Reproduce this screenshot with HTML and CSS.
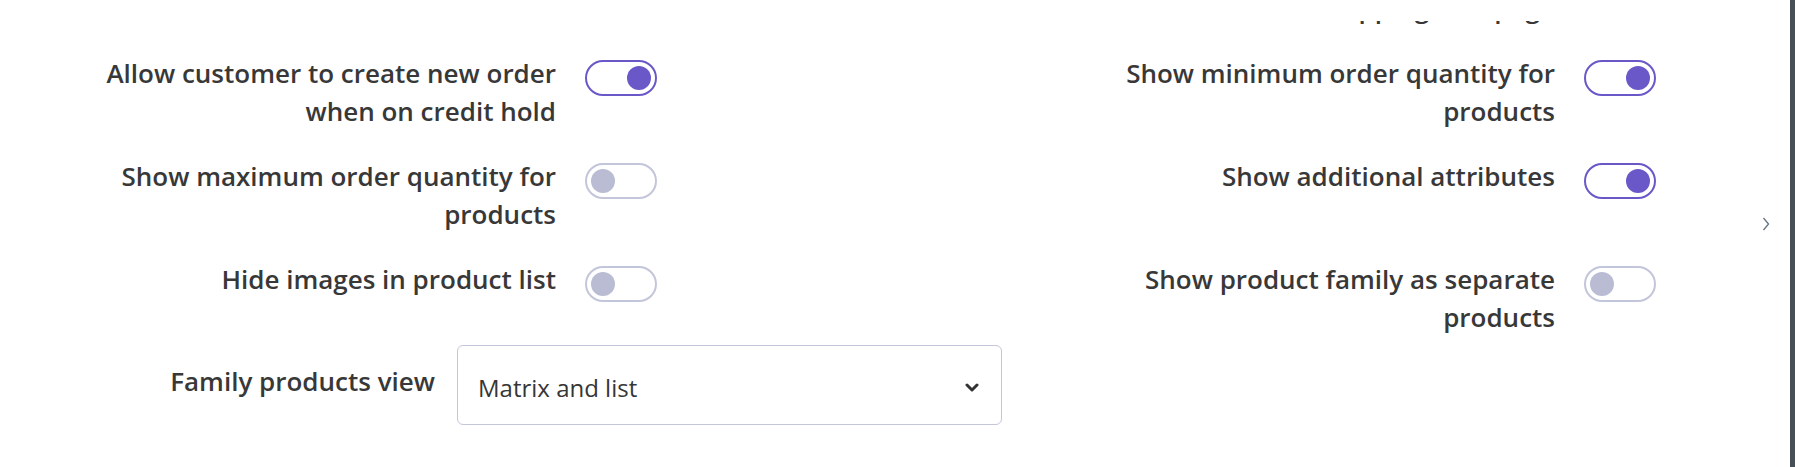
FILE: index.html
```html
<!DOCTYPE html>
<html lang="en">
<head>
<meta charset="utf-8">
<title>Settings</title>
<link rel="stylesheet" href="styles.css">
</head>
<body>
<div class="page">
  <main class="content">
    <div class="scroller">
      <div class="settings-grid">
        <div class="setting">
          <span class="label">Show prices in product list</span>
          <span class="toggle on"><span class="thumb"></span></span>
        </div>
        <div class="setting">
          <span class="label">Show estimated delivery costs on shipping cost page</span>
          <span class="toggle on"><span class="thumb"></span></span>
        </div>

        <div class="setting">
          <span class="label">Allow customer to create new order when on credit hold</span>
          <span class="toggle on"><span class="thumb"></span></span>
        </div>
        <div class="setting">
          <span class="label">Show minimum order quantity for products</span>
          <span class="toggle on"><span class="thumb"></span></span>
        </div>

        <div class="setting">
          <span class="label">Show maximum order quantity for products</span>
          <span class="toggle"><span class="thumb"></span></span>
        </div>
        <div class="setting">
          <span class="label">Show additional attributes</span>
          <span class="toggle on"><span class="thumb"></span></span>
        </div>

        <div class="setting">
          <span class="label">Hide images in product list</span>
          <span class="toggle"><span class="thumb"></span></span>
        </div>
        <div class="setting">
          <span class="label">Show product family as separate products</span>
          <span class="toggle"><span class="thumb"></span></span>
        </div>
      </div>

      <div class="select-row">
        <span class="select-label">Family products view</span>
        <div class="select">
          <span class="select-value">Matrix and list</span>
          <svg class="select-caret" width="14" height="9" viewBox="0 0 14 9" aria-hidden="true">
            <polyline points="2,2 7,7 12,2" fill="none" stroke="#333" stroke-width="3" stroke-linecap="round" stroke-linejoin="round"/>
          </svg>
        </div>
      </div>
    </div>
  </main>
  <aside class="side">
    <svg class="side-chevron" width="8" height="14" viewBox="0 0 8 14" aria-hidden="true">
      <polyline points="1.5,1 6.5,7 1.5,13" fill="none" stroke="#6c7886" stroke-width="1.4"/>
    </svg>
  </aside>
  <div class="edge"></div>
</div>
</body>
</html>
```

FILE: styles.css
```css
html, body {
  margin: 0;
  padding: 0;
  background: #ffffff;
}

body {
  font-family: "Open Sans", Roboto, "Liberation Sans", sans-serif;
  color: #363636;
  height: 467px;
  overflow: hidden;
}

.page {
  display: flex;
  height: 467px;
  overflow: hidden;
}

.content {
  flex: 1;
  padding-top: 21px;
  box-sizing: border-box;
  height: 467px;
}

.scroller {
  height: 446px;
  overflow: hidden;
  padding-left: 86px;
}

.settings-grid {
  margin-top: -70px;
  display: grid;
  grid-template-columns: 999px 1fr;
  grid-auto-rows: 76px;
  row-gap: 27px;
}

.setting {
  display: flex;
  align-items: flex-start;
  gap: 29px;
}

.label {
  width: 470px;
  text-align: right;
  font-size: 26px;
  font-weight: 600;
  line-height: 38px;
  color: #383838;
}

.toggle {
  box-sizing: border-box;
  flex: none;
  width: 72px;
  height: 36px;
  margin-top: 6px;
  border: 2px solid #c3c6da;
  border-radius: 18px;
  padding: 4px;
  display: flex;
  justify-content: flex-start;
  background: #fff;
}

.toggle .thumb {
  width: 24px;
  height: 24px;
  border-radius: 50%;
  background: #b9bcd2;
}

.toggle.on {
  border-color: #6a58c9;
  justify-content: flex-end;
}

.toggle.on .thumb {
  background: #6a58c9;
}

.select-row {
  display: flex;
  align-items: flex-start;
  gap: 22px;
  margin-top: 9px;
}

.select-label {
  width: 349px;
  text-align: right;
  font-size: 26px;
  font-weight: 600;
  line-height: 38px;
  padding-top: 17px;
  color: #383838;
}

.select {
  box-sizing: border-box;
  width: 545px;
  height: 80px;
  border: 1.5px solid #c4c6da;
  border-radius: 6px;
  display: flex;
  align-items: center;
  justify-content: space-between;
  padding: 4px 22px 0 20px;
}

.select-value {
  font-size: 24px;
  font-weight: 400;
  color: #363636;
}

.select-caret {
  display: block;
}

.side {
  width: 50px;
  padding-top: 217px;
  padding-left: 22px;
  box-sizing: border-box;
}

.side-chevron {
  display: block;
}

.edge {
  width: 5px;
  background: #474f57;
}
```
